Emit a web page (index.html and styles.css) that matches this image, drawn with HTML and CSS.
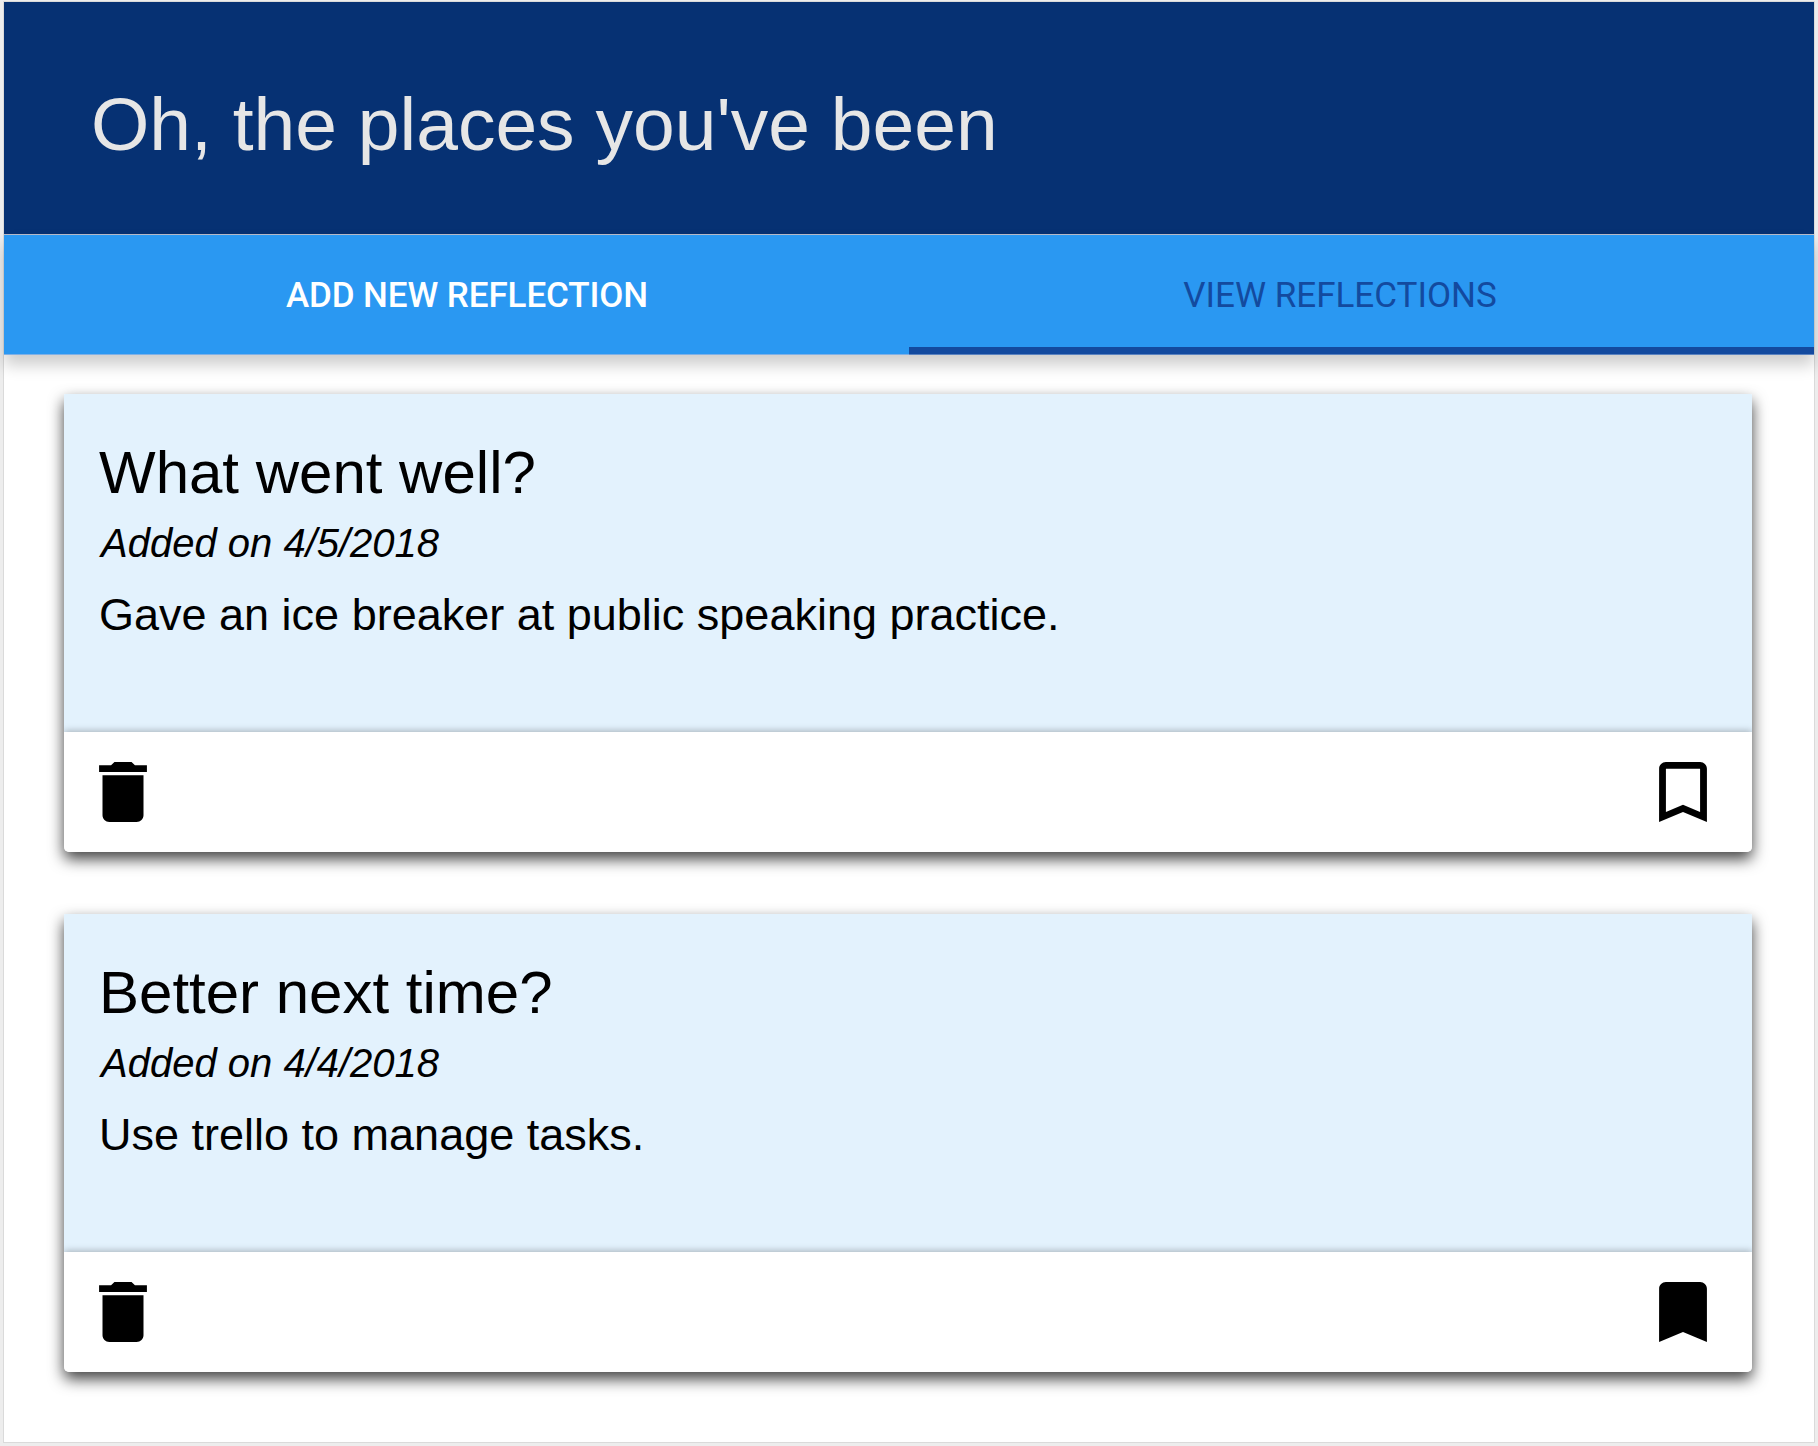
FILE: index.html
```
<!DOCTYPE html>
<html lang="en">
<head>
<meta charset="utf-8">
<title>Reflections</title>
<link rel="stylesheet" href="styles.css">
</head>
<body>
<div class="app">
  <header class="header"><h1 class="header-title">Oh, the places you've been</h1></header>
  <nav class="tabs">
    <a class="tab">ADD NEW REFLECTION</a>
    <a class="tab tab-active">VIEW REFLECTIONS</a>
  </nav>
  <main class="list">
    <article class="card">
      <div class="card-body">
        <h2 class="card-title">What went well?</h2>
        <p class="card-date">Added on 4/5/2018</p>
        <p class="card-text">Gave an ice breaker at public speaking practice.</p>
      </div>
      <div class="card-actions">
        <svg class="icon" viewBox="0 0 24 24" preserveAspectRatio="none"><path d="M6 19c0 1.100.9 2 2 2h8c1.100 0 2-.9 2-2V7H6v12zM19 4h-3.500l-1-1h-5l-1 1H5v2h14V4z"/></svg>
        <svg class="icon" viewBox="0 0 24 24" preserveAspectRatio="none"><path d="M17 3H7c-1.100 0-1.990.9-1.990 2L5 21l7-3 7 3V5c0-1.100-.9-2-2-2zm0 15l-5-2.180L7 18V5h10v13z"/></svg>
      </div>
    </article>
    <article class="card">
      <div class="card-body">
        <h2 class="card-title">Better next time?</h2>
        <p class="card-date">Added on 4/4/2018</p>
        <p class="card-text">Use trello to manage tasks.</p>
      </div>
      <div class="card-actions">
        <svg class="icon" viewBox="0 0 24 24" preserveAspectRatio="none"><path d="M6 19c0 1.100.9 2 2 2h8c1.100 0 2-.9 2-2V7H6v12zM19 4h-3.500l-1-1h-5l-1 1H5v2h14V4z"/></svg>
        <svg class="icon" viewBox="0 0 24 24" preserveAspectRatio="none"><path d="M17 3H7c-1.100 0-1.990.9-1.990 2L5 21l7-3 7 3V5c0-1.100-.9-2-2-2z"/></svg>
      </div>
    </article>
  </main>
</div>
</body>
</html>
```
FILE: styles.css
```
* { box-sizing: border-box; }
body {
  margin: 0;
  height: 1446px;
  padding: 1px 3px 3px;
  background: #ededed;
  font-family: "Liberation Sans", Arial, sans-serif;
  color: #000;
  overflow: hidden;
}
h1, h2, p { margin: 0; font-weight: 400; }
.app {
  height: 1442px;
  border: 1px solid #dadada;
  background: #fff;
}
.header {
  height: 233px;
  padding: 80px 0 0 87px;
  background: #063173;
  border-bottom: 1px solid #b9bccb;
}
.header-title {
  font-size: 75px;
  line-height: 84px;
  color: #e6e6e6;
}
.tabs {
  display: flex;
  height: 120px;
  background: #2a98f2;
  border-bottom: 1px solid #7fb0e6;
  box-shadow: 0 10px 15px rgba(0, 0, 0, 0.2);
}
.tab {
  flex: 0 0 50%;
  height: 119px;
  padding-left: 21px;
  text-align: center;
  font: 500 35px/121px Roboto, sans-serif;
  letter-spacing: -0.1px;
  color: #fff;
}
.tab-active {
  padding: 0 43px 0 0;
  color: #134a9f;
  font-weight: 400;
  letter-spacing: 0;
  box-shadow: inset 0 -7px #134a9f, 0 1px #5a82c0;
}
.list {
  display: flex;
  flex-direction: column;
  gap: 62px;
  padding: 39px 62px 0 60px;
}
.card {
  height: 458px;
  border-radius: 1px 1px 5px 5px;
  background: #fff;
  box-shadow: 0 7px 15px rgba(0, 0, 0, 0.75);
  overflow: hidden;
}
.card-body {
  height: 338px;
  padding: 44px 35px 0;
  background: #e3f2fd;
}
.card-title { font-size: 60px; line-height: 70px; }
.card-date {
  margin: 11px 0 0 2px;
  font-size: 40px;
  line-height: 48px;
  font-style: italic;
}
.card-text {
  margin-top: 21px;
  font-size: 45px;
  line-height: 54px;
}
.card-actions {
  display: flex;
  align-items: center;
  justify-content: space-between;
  height: 120px;
  padding: 0 28px 0 18px;
  background: #fff;
  box-shadow: 0 -1px 7px rgba(0, 0, 0, 0.28);
}
.icon { width: 82px; height: 80px; }
```
